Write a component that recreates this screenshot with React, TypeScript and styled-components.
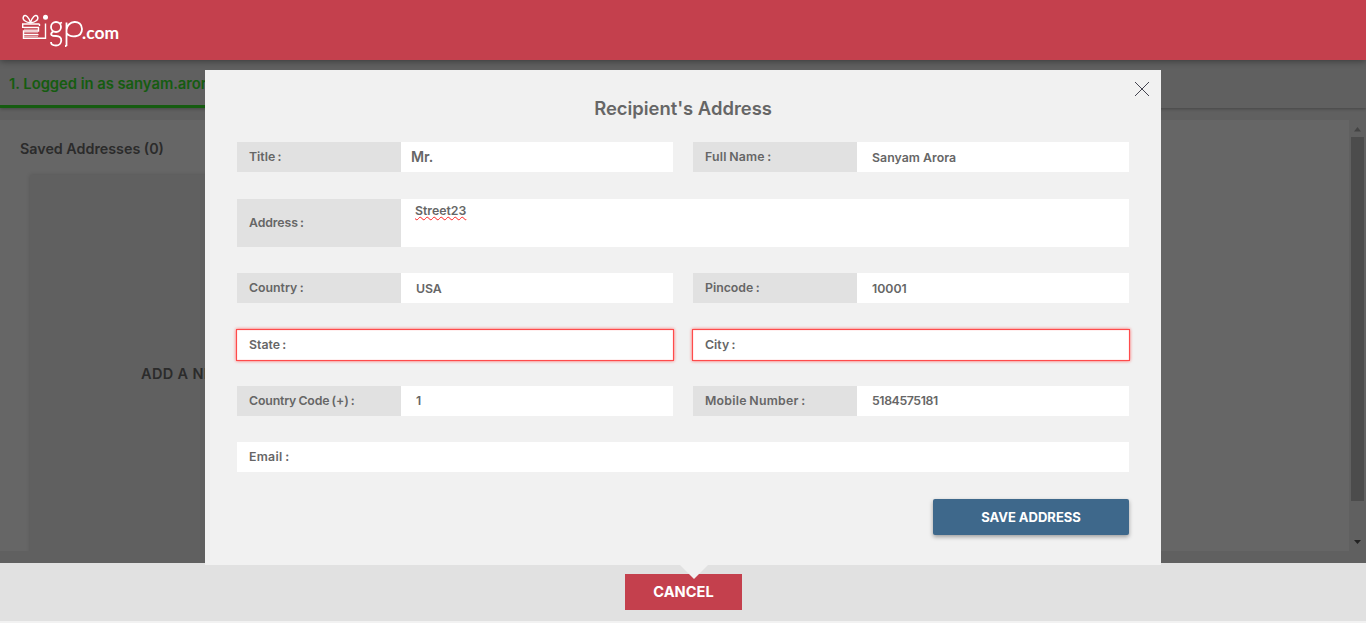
import React from "react";
import styled, { createGlobalStyle } from "styled-components";

const Global = createGlobalStyle`
  *{box-sizing:border-box}
  html,body{margin:0;padding:0;height:100%;overflow:hidden}
  body{font-family:Inter,"Open Sans",sans-serif;background:#f2f2f2;color:#666}
`;

const Page = styled.div`
  position: relative;
  width: 1366px;
  height: 623px;
  overflow: hidden;
  display: flex;
  flex-direction: column;
`;
const Header = styled.header`
  height: 60px;
  flex: none;
  background: #c4404d;
  box-shadow: 0 1px 7px rgba(0, 0, 0, 0.42);
  padding: 8px 0 0 15px;
  position: relative;
  z-index: 1;
`;
const Text = styled.span<{ $size?: number; $weight?: number; $spacing?: number; $color?: string }>`
  font-size: ${(p) => p.$size ?? 12.3}px;
  font-weight: ${(p) => p.$weight ?? 560};
  letter-spacing: ${(p) => p.$spacing ?? 0}px;
  color: ${(p) => p.$color ?? "#666"};
  line-height: 18px;
  white-space: nowrap;
`;
const Backdrop = styled.main`
  height: 503px;
  flex: none;
  background: #606060;
  display: flex;
  flex-direction: column;
`;
const Steps = styled.div`
  height: 48px;
  flex: none;
  box-shadow: 0 1px 3px rgba(0, 0, 0, 0.28);
`;
const ActiveStep = styled.div`
  width: 340px;
  height: 48px;
  padding: 15px 0 0 9px;
  border-bottom: 3px solid #155c10;
  display: flex;
  align-items: flex-start;
`;
const Body = styled.div`
  margin-top: 12px;
  height: 431px;
  display: flex;
`;
const Saved = styled.section`
  width: 1349px;
  background: #666;
  padding: 20px 0 0 20px;
  display: flex;
  flex-direction: column;
  overflow: hidden;
`;
const NewCard = styled.div`
  margin: 17px 0 0 10px;
  width: 420px;
  flex: 1 0 400px;
  background: #606060;
  box-shadow: 0 0 4px rgba(0, 0, 0, 0.16);
  padding: 190px 0 0 111px;
  display: flex;
  align-items: flex-start;
`;
const Scrollbar = styled.div`
  width: 17px;
  padding: 7px 2px 6px;
  display: flex;
  flex-direction: column;
  align-items: center;
`;
const Thumb = styled.div`
  width: 13px;
  height: 364px;
  margin: 5px 0 39px;
  background: #4c4c4c;
`;
const Footer = styled.footer`
  height: 58px;
  flex: none;
  background: #e1e1e1;
  padding: 11px 0 0 625px;
`;
const Cancel = styled.button`
  width: 117px;
  height: 36px;
  border: 0;
  padding: 0;
  background: #c4404d;
  font-family: inherit;
`;
const Modal = styled.section`
  position: absolute;
  z-index: 2;
  left: 205px;
  top: 70px;
  width: 956px;
  height: 495px;
  padding: 29px 32px 0;
  background: #f1f1f1;
  display: flex;
  flex-direction: column;
`;
const Pointer = styled.svg`
  position: absolute;
  left: 475px;
  top: 495px;
`;
const Close = styled.svg`
  position: absolute;
  left: 929px;
  top: 11px;
`;
const Title = styled.h1`
  margin: 0 0 25px;
  height: 18px;
  display: flex;
  justify-content: center;
`;
const Form = styled.form`
  display: grid;
  grid-template-columns: 436px 436px;
  grid-template-rows: 31px 48px 31px 30px 30px 30px;
  align-items: start;
  row-gap: 26px;
  column-gap: 20px;
`;
const Field = styled.label<{ $wide?: boolean; $tall?: boolean; $error?: boolean }>`
  display: flex;
  height: ${(p) => (p.$tall ? 48 : 30)}px;
  grid-column: ${(p) => (p.$wide ? "1 / -1" : "auto")};
  background: #fff;
  box-shadow: ${(p) => (p.$error ? "0 0 0 1px #ff4b4b, 0 0 3px 1px #ff5a5a, inset 0 0 1px #ff6a6a" : "none")};
`;
const Label = styled.span<{ $plain?: boolean }>`
  width: 164px;
  padding-left: 12px;
  display: flex;
  align-items: center;
  word-spacing: -0.7px;
  background: ${(p) => (p.$plain ? "transparent" : "#e1e1e1")};
`;
const Value = styled.span<{ $pad?: number; $top?: number }>`
  padding: ${(p) => p.$top ?? 7}px 0 0 ${(p) => p.$pad ?? 15}px;
  display: flex;
  align-items: flex-start;
`;
const Misspelled = styled(Text)`
  text-decoration: underline wavy #f22;
  text-decoration-thickness: 1px;
  text-underline-offset: 1px;
  text-decoration-skip-ink: none;
`;
const Save = styled.button`
  align-self: flex-end;
  margin-top: 27px;
  width: 196px;
  height: 36px;
  border: 0;
  padding: 0;
  border-radius: 2px;
  background: #3e688b;
  box-shadow: 0 2px 4px rgba(0, 0, 0, 0.35);
  font-family: inherit;
`;

const Logo = () => (
  <svg width="110" height="44" viewBox="15 8 110 44" fill="none" stroke="#fff" strokeWidth="1.4">
    <path d="M30.500 23C25 22 22 19.500 23.500 16.500C25.500 13.500 29.500 18 30.500 23C31.500 18 35.500 13.500 37.500 16.500C39 19.500 36 22 30.500 23" />
    <path d="M39.500 24H22.700V27.400H38.500V31H23.500V34.600H38.500M23.500 34.600V38.300H45.500V23.500M39.500 24V26" />
    <path d="M24 29.200H39M24 32.800H38M24 36.400H38" strokeWidth="0.6" />
    <circle cx="45.500" cy="17.300" r="2.500" fill="#fff" stroke="none" />
    <g strokeWidth="1.800">
      <circle cx="56" cy="27" r="5" />
      <path d="M62 22.500L59.500 23.500M53 31.500C49 35 52 36 56 36C64 36 62 45.500 56 45.500C53 45.500 51 44 51 42M66.500 46V22.500M66.500 46H65M66.500 30C67 20 82 19 82 29C82 38 70 38 66.500 33" />
    </g>
    <text x="82" y="39" fill="#fff" stroke="none" fontFamily="Lato" fontWeight="700" fontSize="17" textLength="37" lengthAdjust="spacingAndGlyphs">.com</text>
  </svg>
);

export default function App() {
  return (
    <Page>
      <Global />
      <Header><Logo /></Header>
      <Backdrop>
        <Steps>
          <ActiveStep><Text $size={14.8} $spacing={-0.03} $color="#155c10">1. Logged in as sanyam.arora</Text></ActiveStep>
        </Steps>
        <Body>
          <Saved>
            <Text $size={14.3} $color="#2b2b2b">Saved Addresses (0)</Text>
            <NewCard><Text $size={14.5} $spacing={0.35} $color="#2b2b2b">ADD A NEW ADDRESS</Text></NewCard>
          </Saved>
          <Scrollbar>
            <svg width="7" height="5"><path d="M0 4.500L3.500 0L7 4.500Z" fill="#444" /></svg>
            <Thumb />
            <svg width="7" height="4"><path d="M0 0H7L3.500 4Z" fill="#222" /></svg>
          </Scrollbar>
        </Body>
      </Backdrop>
      <Footer><Cancel><Text $size={14.6} $weight={700} $color="#fff">CANCEL</Text></Cancel></Footer>
      <Modal>
        <Close width="16" height="16" stroke="#444450" strokeWidth="1"><path d="M1 1L15 15M15 1L1 15" /></Close>
        <Title><Text $size={18.4}>Recipient's Address</Text></Title>
        <Form>
          <Field><Label><Text>Title :</Text></Label><Value $pad={10} $top={6}><Text $size={14.2}>Mr.</Text></Value></Field>
          <Field><Label><Text $spacing={0.2}>Full Name :</Text></Label><Value><Text $spacing={0.05}>Sanyam Arora</Text></Value></Field>
          <Field $wide $tall><Label><Text $spacing={-0.1}>Address :</Text></Label><Value $pad={14} $top={3}><Misspelled>Street23</Misspelled></Value></Field>
          <Field><Label><Text>Country :</Text></Label><Value><Text $spacing={-0.1}>USA</Text></Value></Field>
          <Field><Label><Text>Pincode :</Text></Label><Value><Text>10001</Text></Value></Field>
          <Field $error><Label $plain><Text>State :</Text></Label></Field>
          <Field $error><Label $plain><Text>City :</Text></Label></Field>
          <Field><Label><Text $spacing={-0.15}>Country Code (+) :</Text></Label><Value $top={6}><Text>1</Text></Value></Field>
          <Field><Label><Text $spacing={0.25}>Mobile Number :</Text></Label><Value $top={6}><Text $spacing={-0.4}>5184575181</Text></Value></Field>
          <Field $wide><Label $plain><Text $spacing={0.3}>Email :</Text></Label></Field>
        </Form>
        <Save type="button"><Text $size={13} $weight={700} $color="#fff">SAVE ADDRESS</Text></Save>
        <Pointer width="28" height="14"><path d="M0 0H28L14 14Z" fill="#f1f1f1" /></Pointer>
      </Modal>
    </Page>
  );
}
